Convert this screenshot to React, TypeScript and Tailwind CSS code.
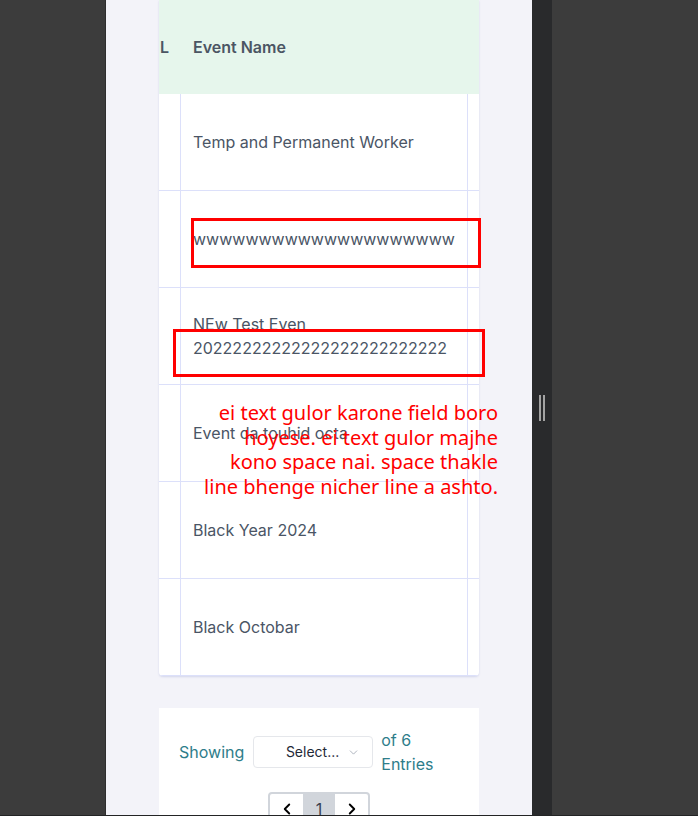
import { ChevronDown, ChevronLeft, ChevronRight } from 'lucide-react';

const EVENTS = [
  'Temp and Permanent Worker',
  'wwwwwwwwwwwwwwwwwwww',
  'NEw Test Even 20222222222222222222222222',
  'Event da touhid octa',
  'Black Year 2024',
  'Black Octobar',
];

function EventTable() {
  return (
    <div className="overflow-hidden rounded-b bg-white shadow-[0_1px_2px_rgba(120,130,200,0.25)]">
      <div className="flex h-[94px] items-center bg-[#e6f6ec] text-[16px] font-semibold text-[#4b5563]">
        <div className="w-[22px] shrink-0 overflow-hidden pl-px">L</div>
        <div className="pl-3">Event Name</div>
      </div>
      {EVENTS.map((name) => (
        <div key={name} className="flex h-[97px] border-b border-[#dce0fa]">
          <div className="w-[22px] shrink-0 border-r border-[#dce0fa]" />
          <div className="flex w-[287px] shrink-0 items-center border-r border-[#dce0fa] px-3 text-[16px] leading-6 text-[#4a5565] break-words">
            {name}
          </div>
          <div className="flex-1" />
        </div>
      ))}
    </div>
  );
}

function Pagination() {
  return (
    <div className="flex flex-col items-center bg-white px-5 pt-5 pb-6">
      <div className="flex w-full items-center gap-2 text-[16px] leading-6 text-[#2e7d8a]">
        <span>Showing</span>
        <div className="ml-px flex h-8 w-[120px] shrink-0 items-center justify-end gap-2 rounded border border-[#e5e7eb] pr-3 text-[14px] text-[#1f2937]">
          <span>Select...</span>
          <ChevronDown size={13} strokeWidth={1.5} className="text-[#9ca3af]" />
        </div>
        <span className="w-[60px]">of 6 Entries</span>
      </div>
      <div className="mt-4 flex h-[34px] overflow-hidden rounded border-2 border-[#d1d5db]">
        <button className="flex w-[33px] items-center justify-center">
          <ChevronLeft size={18} strokeWidth={2.5} className="text-black" />
        </button>
        <button className="flex w-[32px] items-center justify-center bg-[#d1d5db] text-[16px] text-[#374151]">
          1
        </button>
        <button className="flex w-[33px] items-center justify-center">
          <ChevronRight size={18} strokeWidth={2.5} className="text-black" />
        </button>
      </div>
    </div>
  );
}

export default function App() {
  return (
    <div className="flex h-[816px] w-[698px] flex-col overflow-hidden bg-[#3c3c3c] font-['Inter',sans-serif]">
      <div className="flex h-[815px]">
        <div className="w-[106px] shrink-0 border-r border-[#2e2e2e]" />
        <div className="relative w-[426px] shrink-0 overflow-hidden bg-[#f3f3f9] px-[53px]">
          <EventTable />
          <div className="mt-[32px]">
            <Pagination />
          </div>

          {/* review annotations */}
          <div className="absolute top-[218px] left-[85px] h-[50px] w-[290px] border-[3px] border-[#ff0000]" />
          <div className="absolute top-[329px] left-[67px] h-[48px] w-[312px] border-[3px] border-[#ff0000]" />
          <p className="absolute top-[401px] right-[34px] text-right font-['Noto_Sans',sans-serif] text-[20px] leading-[24.5px] whitespace-pre text-[#ff0000]">
            {'ei text gulor karone field boro\nhoyese. ei text gulor majhe\nkono space nai. space thakle\nline bhenge nicher line a ashto.'}
          </p>
        </div>
        <div className="flex w-[20px] shrink-0 items-center justify-center gap-[2px] bg-[#292a2c]">
          <div className="h-[26px] w-[2px] bg-[#a3a3a3]" />
          <div className="h-[26px] w-[2px] bg-[#a3a3a3]" />
        </div>
        <div className="flex-1" />
      </div>
      <div className="h-px bg-[#232425]" />
    </div>
  );
}
